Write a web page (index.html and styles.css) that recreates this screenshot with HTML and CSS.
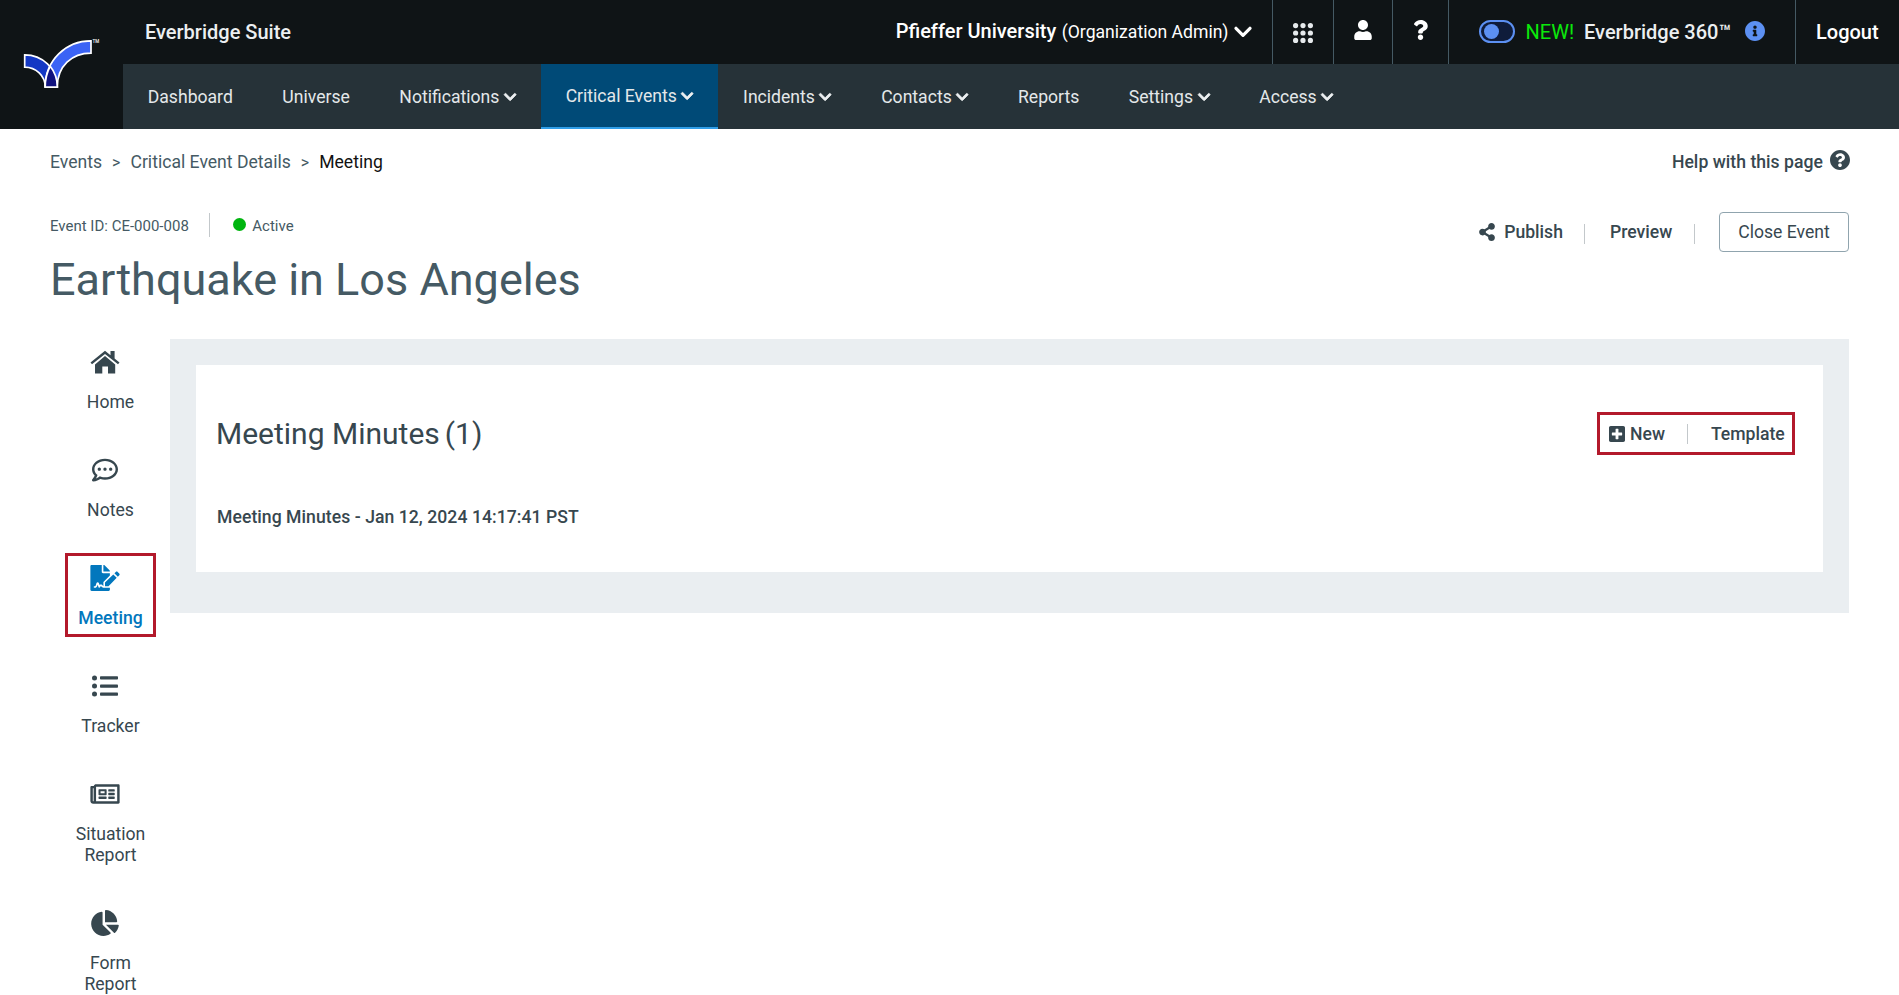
FILE: index.html
```
<!DOCTYPE html>
<html lang="en">
<head>
<meta charset="utf-8">
<title>Everbridge Suite</title>
<link rel="stylesheet" href="styles.css">
</head>
<body>
<svg class="defs" aria-hidden="true">
  <symbol id="chev" viewBox="0 0 448 512"><path d="M207.029 381.476L12.686 187.132c-9.373-9.373-9.373-24.569 0-33.941l22.667-22.667c9.357-9.357 24.522-9.375 33.901-.04L224 284.505l154.745-154.021c9.379-9.335 24.544-9.317 33.901.04l22.667 22.667c9.373 9.373 9.373 24.569 0 33.941L240.971 381.476c-9.373 9.372-24.569 9.372-33.942 0z"/></symbol>
</svg>
<header class="header">
  <div class="logo">
    <svg viewBox="0 0 123 129" width="123" height="129">
      <g stroke="#fff" stroke-width="1.7">
        <path fill="#1438c4" d="M24.7 54.8C42 54.8 57.3 68 57.3 87H45.2C45.2 76 36 67.2 24.7 67.2Z"/>
        <path fill="#3b63f5" d="M91 40.8C66 40.8 45.2 60 45.2 87H57.3C57.3 66 72 53.2 91 53.2Z"/>
        <path fill="#10127e" d="M50.2 66.3C46.8 72.5 45.2 79.5 45.2 87H57.3C57.3 79 54.8 72 50.2 66.3Z"/>
      </g>
      <text class="tm" x="92.5" y="43.3">TM</text>
    </svg>
  </div>
  <div class="topbar">
    <div class="suite">Everbridge Suite</div>
    <div class="org"><b>Pfieffer University</b><span>(Organization Admin)</span>
      <svg width="18" height="12" viewBox="0 0 18 12" fill="none" stroke="#fff" stroke-width="3.2" stroke-linecap="round" stroke-linejoin="round"><path d="M2 2.3L9 9.3L16 2.3"/></svg>
    </div>
    <div class="cell apps"><svg width="20" height="20" viewBox="0 0 20 20" fill="#e6eaec"><circle cx="2.6" cy="2.6" r="2.6"/><circle cx="10" cy="2.6" r="2.6"/><circle cx="17.4" cy="2.6" r="2.6"/><circle cx="2.6" cy="10" r="2.6"/><circle cx="10" cy="10" r="2.6"/><circle cx="17.4" cy="10" r="2.6"/><circle cx="2.6" cy="17.4" r="2.6"/><circle cx="10" cy="17.4" r="2.6"/><circle cx="17.4" cy="17.4" r="2.6"/></svg></div>
    <div class="cell user"><svg width="18" height="20" viewBox="0 0 448 512" fill="#fff"><path d="M224 256c70.700 0 128-57.300 128-128S294.700 0 224 0 96 57.300 96 128s57.300 128 128 128zm89.600 32h-16.700c-22.200 10.200-46.900 16-72.900 16s-50.600-5.800-72.900-16h-16.700C60.200 288 0 348.200 0 422.400V464c0 26.500 21.500 48 48 48h352c26.500 0 48-21.500 48-48v-41.600c0-74.200-60.200-134.400-134.400-134.400z"/></svg></div>
    <div class="cell ques"><svg width="15" height="20" viewBox="0 0 384 512" fill="#fff"><path d="M202.021 0C122.202 0 70.503 32.703 29.914 91.026c-7.363 10.580-5.093 25.086 5.178 32.874l43.138 32.709c10.373 7.865 25.132 6.026 33.253-4.148 25.049-31.381 43.630-49.449 82.757-49.449 30.764 0 68.816 19.799 68.816 49.631 0 22.552-18.617 34.134-48.993 51.164-35.423 19.860-82.299 44.576-82.299 106.405V320c0 13.255 10.745 24 24 24h72.471c13.255 0 24-10.745 24-24v-5.773c0-42.860 125.268-44.645 125.268-160.627C377.504 66.256 286.902 0 202.021 0zM192 373.459c-38.196 0-69.271 31.075-69.271 69.271 0 38.195 31.075 69.270 69.271 69.270s69.271-31.075 69.271-69.271-31.075-69.270-69.271-69.270z"/></svg></div>
    <div class="cell suite360">
      <span class="toggle"><i></i></span><span class="new">NEW!</span><b>Everbridge 360™</b>
      <svg width="20" height="20" viewBox="8 8 496 496" fill="#5c90f2"><path d="M256 8C119.043 8 8 119.083 8 256c0 136.997 111.043 248 248 248s248-111.003 248-248C504 119.083 392.957 8 256 8zm0 110c23.196 0 42 18.804 42 42s-18.804 42-42 42-42-18.804-42-42 18.804-42 42-42zm56 254c0 6.627-5.373 12-12 12h-88c-6.627 0-12-5.373-12-12v-24c0-6.627 5.373-12 12-12h12v-64h-12c-6.627 0-12-5.373-12-12v-24c0-6.627 5.373-12 12-12h64c6.627 0 12 5.373 12 12v100h12c6.627 0 12 5.373 12 12v24z"/></svg>
    </div>
    <div class="cell logout">Logout</div>
  </div>
  <nav class="nav">
    <a>Dashboard</a>
    <a>Universe</a>
    <a>Notifications<svg class="chev"><use href="#chev"/></svg></a>
    <a class="on">Critical Events<svg class="chev"><use href="#chev"/></svg></a>
    <a>Incidents<svg class="chev"><use href="#chev"/></svg></a>
    <a>Contacts<svg class="chev"><use href="#chev"/></svg></a>
    <a>Reports</a>
    <a>Settings<svg class="chev"><use href="#chev"/></svg></a>
    <a>Access<svg class="chev"><use href="#chev"/></svg></a>
  </nav>
</header>
<main class="main">
  <div class="crumbs">
    <span>Events</span><span class="gt">&gt;</span><span>Critical Event Details</span><span class="gt">&gt;</span><span class="here">Meeting</span>
    <div class="help">Help with this page
      <svg width="20" height="20" viewBox="8 8 496 496" fill="#37474f"><path d="M504 256c0 136.997-111.043 248-248 248S8 392.997 8 256C8 119.083 119.043 8 256 8s248 111.083 248 248zM262.655 90c-54.497 0-89.255 22.957-116.549 63.758-3.536 5.286-2.353 12.415 2.715 16.258l34.699 26.310c5.205 3.947 12.621 3.008 16.665-2.122 17.864-22.658 30.113-35.797 57.303-35.797 20.429 0 45.698 13.148 45.698 32.958 0 14.976-12.363 22.667-32.534 33.976C247.128 238.528 216 254.941 216 296v4c0 6.627 5.373 12 12 12h56c6.627 0 12-5.373 12-12v-1.333c0-28.462 83.186-29.647 83.186-106.667 0-58.002-60.165-102-116.531-102zM256 338c-25.365 0-46 20.635-46 46 0 25.364 20.635 46 46 46s46-20.636 46-46c0-25.365-20.635-46-46-46z"/></svg>
    </div>
  </div>
  <div class="heading">
    <div>
      <div class="meta"><span>Event ID: CE-000-008</span><i class="rule"></i><i class="dot"></i><span>Active</span></div>
      <h1>Earthquake in Los Angeles</h1>
    </div>
    <div class="actions">
      <svg width="16" height="18" viewBox="0 0 448 512" fill="#37474f"><path d="M352 320c-22.608 0-43.387 7.819-59.790 20.895l-102.486-64.054a96.551 96.551 0 0 0 0-41.683l102.486-64.054C308.613 184.181 329.392 192 352 192c53.019 0 96-42.981 96-96S405.019 0 352 0s-96 42.981-96 96c0 7.158.790 14.130 2.276 20.841L155.790 180.895C139.387 167.819 118.608 160 96 160c-53.019 0-96 42.981-96 96s42.981 96 96 96c22.608 0 43.387-7.819 59.790-20.895l102.486 64.054A96.301 96.301 0 0 0 256 416c0 53.019 42.981 96 96 96s96-42.981 96-96-42.981-96-96-96z"/></svg>
      <b class="publish">Publish</b><i class="rule"></i><b class="preview">Preview</b><i class="rule"></i>
      <button class="close">Close Event</button>
    </div>
  </div>
  <div class="body">
    <aside class="side">
      <a class="item"><svg width="30" height="26" viewBox="0 0 30 26"><path d="M15 7L25.200 15.500V24.500H18V17.500H12.300V24.500H5V15.500Z"/><path d="M.5 13.500L15 1.800L20.500 6.200V2H24.600V9.500L29.500 13.500L28 15.300L15 4.900L2 15.300Z"/></svg><span>Home</span></a>
      <a class="item"><svg width="26" height="26" viewBox="0 0 512 512"><path d="M144 208c-17.700 0-32 14.300-32 32s14.300 32 32 32 32-14.300 32-32-14.300-32-32-32zm112 0c-17.700 0-32 14.300-32 32s14.300 32 32 32 32-14.300 32-32-14.300-32-32-32zm112 0c-17.700 0-32 14.300-32 32s14.300 32 32 32 32-14.300 32-32-14.300-32-32-32zM256 32C114.600 32 0 125.100 0 240c0 47.600 19.900 91.200 52.900 126.300C38 405.700 7 439.100 6.500 439.500c-6.600 7-8.400 17.200-4.600 26S14.400 480 24 480c61.500 0 110-25.700 139.100-46.300C192 442.800 223.200 448 256 448c141.400 0 256-93.100 256-208S397.400 32 256 32zm0 368c-26.700 0-53.100-4.100-78.400-12.100l-22.700-7.200-19.500 13.800c-14.300 10.100-33.900 21.400-57.500 29 7.300-12.100 14.400-25.700 19.900-40.200l10.600-28.100-20.600-21.800C69.700 314.100 48 282.200 48 240c0-88.200 93.300-160 208-160s208 71.800 208 160-93.300 160-208 160z"/></svg><span>Notes</span></a>
      <a class="item active"><svg width="30" height="26" viewBox="0 0 576 512"><path d="M218.170 424.140c-2.950-5.920-8.090-6.520-10.170-6.520s-7.220.590-10.020 6.190l-7.670 15.340c-6.370 12.780-25.030 11.370-29.480-2.090L144 386.590l-10.610 31.880c-5.890 17.660-22.380 29.530-41 29.530H80c-8.840 0-16-7.160-16-16s7.160-16 16-16h12.390c4.830 0 9.110-3.080 10.640-7.660l18.190-54.640c3.300-9.810 12.440-16.410 22.780-16.410s19.480 6.590 22.770 16.410l13.880 41.640c19.750-16.190 54.060-9.700 66 14.160 1.890 3.780 5.490 5.950 9.360 6.260v-82.120l128-127.090V160H248c-13.200 0-24-10.800-24-24V0H24C10.700 0 0 10.700 0 24v464c0 13.300 10.700 24 24 24h336c13.300 0 24-10.700 24-24v-40l-128-.110c-16.120-.310-30.580-9.280-37.830-23.750zM384 121.900c0-6.300-2.500-12.400-7-16.900L279.100 7c-4.500-4.500-10.600-7-17-7H256v128h128v-6.100zm-96 225.060V416h68.990l161.680-162.780-67.880-67.880L288 346.960zm280.540-179.630l-31.870-31.870c-9.940-9.940-26.070-9.940-36.010 0l-27.250 27.250 67.880 67.880 27.250-27.250c9.950-9.940 9.950-26.070 0-36.010z"/></svg><span>Meeting</span></a>
      <a class="item"><svg width="26" height="26" viewBox="0 0 26 26"><circle cx="2.500" cy="5" r="2.500"/><circle cx="2.500" cy="13" r="2.500"/><circle cx="2.500" cy="21" r="2.500"/><rect x="8" y="3.300" width="18" height="3.300" rx=".8"/><rect x="8" y="11.400" width="18" height="3.300" rx=".8"/><rect x="8" y="19.500" width="18" height="3.300" rx=".8"/></svg><span>Tracker</span></a>
      <a class="item"><svg width="30" height="26" viewBox="0 0 576 512"><path d="M552 64H112c-20.858 0-38.643 13.377-45.248 32H24c-13.255 0-24 10.745-24 24v272c0 30.928 25.072 56 56 56h496c13.255 0 24-10.745 24-24V88c0-13.255-10.745-24-24-24zM48 392V144h16v248c0 4.411-3.589 8-8 8s-8-3.589-8-8zm480 8H111.422c.374-2.614.578-5.283.578-8V112h416v288zM172 280h136c6.627 0 12-5.373 12-12v-96c0-6.627-5.373-12-12-12H172c-6.627 0-12 5.373-12 12v96c0 6.627 5.373 12 12 12zm28-80h80v40h-80v-40zm-40 140v-24c0-6.627 5.373-12 12-12h136c6.627 0 12 5.373 12 12v24c0 6.627-5.373 12-12 12H172c-6.627 0-12-5.373-12-12zm192 0v-24c0-6.627 5.373-12 12-12h104c6.627 0 12 5.373 12 12v24c0 6.627-5.373 12-12 12H364c-6.627 0-12-5.373-12-12zm0-144v-24c0-6.627 5.373-12 12-12h104c6.627 0 12 5.373 12 12v24c0 6.627-5.373 12-12 12H364c-6.627 0-12-5.373-12-12zm0 72v-24c0-6.627 5.373-12 12-12h104c6.627 0 12 5.373 12 12v24c0 6.627-5.373 12-12 12H364c-6.627 0-12-5.373-12-12z"/></svg><span>Situation<br>Report</span></a>
      <a class="item"><svg width="28" height="26" viewBox="0 0 544 512"><path d="M527.790 288H290.500l158.030 158.030c6.040 6.040 15.980 6.530 22.190.680 38.700-36.460 65.320-85.610 73.130-140.860 1.340-9.460-6.510-17.850-16.060-17.850zm-15.830-64.800C503.720 103.740 408.260 8.280 288.800.040 279.680-.590 272 7.100 272 16.240V240h223.770c9.140 0 16.820-7.680 16.190-16.800zM224 288V50.710c0-9.550-8.390-17.400-17.840-16.060C86.990 51.490-4.100 155.600.140 280.370 4.500 408.510 114.830 513.590 243.030 511.980c50.400-.630 96.970-16.870 135.260-44.030 7.900-5.600 8.420-17.230 1.570-24.080L224 288z"/></svg><span>Form<br>Report</span></a>
    </aside>
    <section class="panel">
      <div class="card">
        <div class="cardhead">
          <h2>Meeting Minutes</h2><span class="count">(1)</span>
          <div class="tools">
            <svg width="16" height="16" viewBox="0 32 448 448" fill="#37474f"><path d="M400 32H48C21.500 32 0 53.500 0 80v352c0 26.500 21.500 48 48 48h352c26.500 0 48-21.500 48-48V80c0-26.500-21.500-48-48-48zm-32 252c0 6.600-5.400 12-12 12h-92v92c0 6.600-5.400 12-12 12h-56c-6.600 0-12-5.400-12-12v-92H92c-6.600 0-12-5.400-12-12v-56c0-6.600 5.400-12 12-12h92v-92c0-6.600 5.400-12 12-12h56c6.600 0 12 5.400 12 12v92h92c6.600 0 12 5.400 12 12v56z"/></svg>
            <b class="newbtn">New</b><i class="rule"></i><b class="tpl">Template</b>
          </div>
        </div>
        <a class="entry">Meeting Minutes - Jan 12, 2024 14:17:41 PST</a>
      </div>
    </section>
  </div>
</main>
</body>
</html>
```
FILE: styles.css
```
* { box-sizing: border-box; }
body {
  margin: 0;
  height: 100vh;
  overflow: hidden;
  background: #fff;
  color: #37474f;
  font: 400 17.6px/21px Roboto, "Liberation Sans", sans-serif;
}
b { font-weight: 500; }
svg { display: block; flex: none; }
.defs { position: absolute; width: 0; height: 0; }

.header {
  display: grid;
  grid-template-columns: 123px 1fr;
  grid-template-rows: 64px 65px;
  background: #0f1416;
  color: #fff;
}
.logo { grid-row: 1 / 3; }
.tm { font-size: 4.5px; font-weight: 500; fill: #fff; }

.topbar { display: flex; align-items: stretch; font-size: 20px; }
.suite { padding-left: 22px; font-weight: 500; color: #eceff1; line-height: 64px; flex: 1; }
.org { display: flex; align-items: center; padding-right: 20px; }
.org b { line-height: 24px; margin-top: -2px; }
.org span { font-size: 17.6px; margin: 0 5.5px; }
.cell { display: flex; align-items: center; border-left: 1px solid #455a64; }
.apps { width: 61px; padding-left: 20px; padding-top: 2px; }
.user { width: 59px; padding-left: 20px; padding-bottom: 4px; }
.ques { width: 56px; padding-left: 20px; padding-bottom: 4px; }
.suite360 { width: 347px; padding-left: 30px; color: #eceff1; }
.toggle {
  width: 36px;
  height: 23px;
  border: 2px solid #5c90f2;
  border-radius: 12px;
  background: #0f1c3a;
  padding: 2px 3px;
  margin-bottom: 1px;
}
.toggle i { display: block; width: 15px; height: 15px; border-radius: 50%; background: #5c90f2; }
.new { color: #0be80b; margin: 0 10px 0 10.5px; }
.suite360 svg { margin: 0 0 2px 14px; }
.logout { width: 104px; padding-left: 20px; font-weight: 500; }

.nav { display: flex; background: #263238; color: #e4e8ea; }
.nav a { display: flex; align-items: center; padding: 1px 24.75px 0; }
.nav .on { background: #004a77; border-bottom: 2px solid #309ee8; }
.chev { width: 12.25px; height: 14px; margin-left: 4.5px; fill: #eceff1; stroke: #eceff1; stroke-width: 28px; overflow: visible; }
#chev { overflow: visible; }

.main { padding: 0 50px; }
.crumbs { display: flex; align-items: center; height: 66px; color: #455a64; }
.gt { font-size: 16px; margin: 0 10px; }
.here { color: #111; }
.help { display: flex; align-items: center; gap: 7px; margin-left: auto; font-weight: 500; color: #37474f; letter-spacing: .03px; }
.help svg { margin: 0 -1px 4px 0; }

.heading { display: flex; justify-content: space-between; align-items: flex-start; }
.meta { display: flex; align-items: center; height: 24px; margin-top: 18px; font-size: 15px; color: #455a64; }
.meta span { padding-top: 2px; }
.rule { display: block; width: 1px; height: 20px; background: #c3c8cb; }
.meta .rule { height: 24px; margin: 0 23px 0 20.5px; }
.dot { width: 13px; height: 13px; border-radius: 50%; background: #00b50f; margin: 0 6px 1px 0; }
h1 { margin: 16px 0 32px; font-size: 45px; line-height: 54px; font-weight: 400; color: #455a64; }
.actions { display: flex; align-items: center; height: 40px; margin-top: 17px; }
.publish { margin: 0 21px 0 9px; }
.preview { margin: 0 21.3px 0 25px; }
.actions .rule { margin-top: 3px; }
.close {
  width: 130px;
  height: 40px;
  margin-left: 24.5px;
  padding: 0;
  border: 1px solid #90a4ae;
  border-radius: 4px;
  background: #fff;
  color: #37474f;
  font: inherit;
}

.body { display: flex; align-items: flex-start; }
.side { width: 120px; flex: none; margin-top: -2px; padding-left: 15px; display: flex; flex-direction: column; gap: 24px; }
.item { width: 91px; border: 3px solid transparent; padding: 9px 0 5.500px; display: flex; flex-direction: column; align-items: center; text-align: center; fill: #37474f; }
.item svg { margin: 0 11px 16.5px 0; }
.active { border-color: #b3192b; color: #0277bd; fill: #0277bd; font-weight: 500; }

.panel { flex: 1; background: #eaeef1; padding: 26px 26px 41px; }
.card { height: 207px; background: #fff; padding: 47px 28px 0 20px; }
.cardhead { display: flex; align-items: center; height: 43px; }
h2, .count { margin: 0; font-size: 30px; line-height: 36px; font-weight: 400; }
.count { margin-left: 5px; }
.tools { display: flex; align-items: center; width: 198px; height: 43px; margin-left: auto; border: 3px solid #b3192b; padding-left: 9px; }
.tools b { padding-top: 1px; }
.newbtn { margin: 0 22.5px 0 5px; }
.tpl { margin-left: 22.5px; }
.entry { display: block; margin-top: 51px; padding-left: 1px; line-height: 22px; font-weight: 500; letter-spacing: .05px; }
```
